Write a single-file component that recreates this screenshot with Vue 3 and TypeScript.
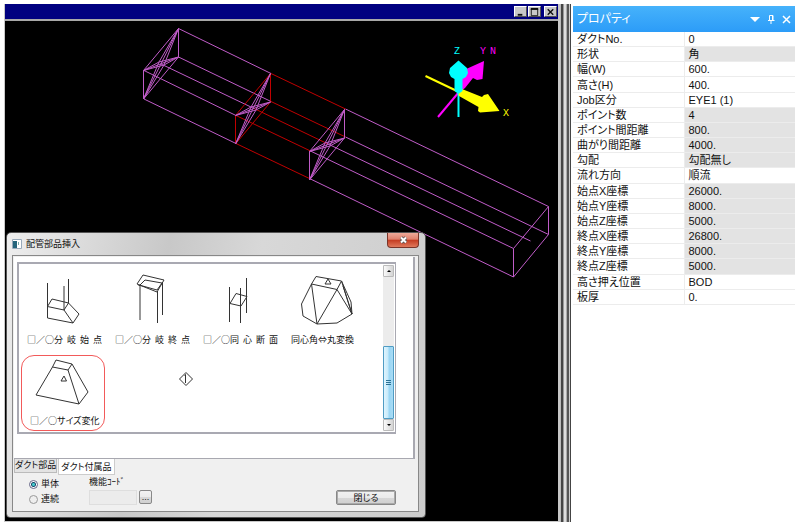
<script setup lang="ts">
import { ref } from 'vue'

interface Property {
  name: string
  value: string
  locked?: boolean
}

interface Part {
  label: string
  box: string
  path: string
}

const properties: Property[] = [
  { name: 'ダクトNo.', value: '0' },
  { name: '形状', value: '角', locked: true },
  { name: '幅(W)', value: '600.' },
  { name: '高さ(H)', value: '400.' },
  { name: 'Job区分', value: 'EYE1 (1)' },
  { name: 'ポイント数', value: '4', locked: true },
  { name: 'ポイント間距離', value: '800.', locked: true },
  { name: '曲がり間距離', value: '4000.', locked: true },
  { name: '勾配', value: '勾配無し', locked: true },
  { name: '流れ方向', value: '順流' },
  { name: '始点X座標', value: '26000.', locked: true },
  { name: '始点Y座標', value: '8000.', locked: true },
  { name: '始点Z座標', value: '5000.', locked: true },
  { name: '終点X座標', value: '26800.', locked: true },
  { name: '終点Y座標', value: '8000.', locked: true },
  { name: '終点Z座標', value: '5000.', locked: true },
  { name: '高さ押え位置', value: 'BOD' },
  { name: '板厚', value: '0.' },
]

const parts: Part[] = [
  {
    label: '□／○分  岐  始  点',
    box: '20 272 84 60',
    path: 'M47.5 284V319L73 324 79 315 68.5 304 52 300 47.5 307.5 64 311 73 324M68.5 280V304L64 311V287',
  },
  {
    label: '□／○分  岐  終  点',
    box: '108 272 84 60',
    path: 'M143 276L164 281 157 293 137 285ZM139 287L145 281 162 284 157 291 139 286ZM140 287V321M157.5 292V324M162.5 283V316',
  },
  {
    label: '□／○同  心  断  面',
    box: '196 272 84 60',
    path: 'M236 294.5L247 297.5 241 307 230 304.5ZM229.5 288V323M240.5 289V324M246.5 279V314',
  },
  {
    label: '同心角⇔丸変換',
    box: '284 272 84 60',
    path: 'M316 277.5L341.5 282 337 290.5 311.5 285ZM325 285H331L328 280ZM311.5 285L301.5 305 303 317 317 325 337 324 352 315 351 303 341.5 282 352 315 337 290.5 317 325ZM343 287L352 315',
  },
]

const faces = [
  { x: 144, y: 28, red: false },
  { x: 236, y: 73, red: true },
  { x: 310, y: 109, red: false },
]

const tab = ref(1)
const mode = ref('single')
const code = ref('')
</script>

<template>
  <main class="app">
    <section class="workspace">
      <header class="bar">
        <button aria-label="最小化"><svg viewBox="0 0 12 11"><path d="M3 8.5H8" stroke-width="2" /></svg></button>
        <button aria-label="最大化"><svg viewBox="0 0 12 11"><path d="M2.5 2V9.500H9.500V2.500M2 2.500H10" /><path d="M2 2H10" stroke-width="2" /></svg></button>
        <button class="apart" aria-label="終了"><svg viewBox="0 0 12 11"><path d="M3 2.500L9 8.500M9 2.500L3 8.500" stroke-width="1.500" /></svg></button>
      </header>
      <div class="canvas">
        <svg class="scene" viewBox="5 21 553 500" preserveAspectRatio="xMinYMin meet">
          <g class="violet">
            <path d="M178.500 28.500L271 73.500M178.500 57L271 101.500M161 64L253 108M144 70.500L236 115.500M144 99L236 143.500" />
            <path d="M345.500 109L548.500 206.500V234.500L345.500 137M328 144L530.500 241M310.500 151L513.500 248.500V277L310.500 179M548.500 206.500L513.500 248.500M548.500 234.500L513.500 277" />
          </g>
          <path class="red" d="M271 73.500L345.500 109M271 101.500L345.500 137M253 108L328 144M236 115.500L310.500 151M236 143.500L310.500 179" />
          <g v-for="f in faces" :key="f.x" class="violet" :transform="`translate(${f.x} ${f.y})`">
            <path :class="{ red: f.red }" d="M-.5 42.500L34.500 .5V29L-.5 71Z" />
            <path d="M34.500 .5L15 34 -.5 71 20 37 34.500 .5L-.5 71M-.5 42.500L15 34 34.500 29 20 37ZL34.500 29" />
          </g>
          <g fill="none" stroke-width="2">
            <path stroke="#f0f" d="M438 117L459 92" />
            <path stroke="#ff0" d="M425.500 76L459 92" />
            <path stroke="#0ff" d="M458.500 90V117" />
          </g>
          <path fill="#f0f" d="M461 91L457 83 463 78 464 70 484 61 482.500 79 477 80 473 78 465 88Z" />
          <path fill="#ff0" d="M458 92L462 89 482 97 484 95 488 94 499.500 111 480 112.500 478 111 478.500 107 459 96Z" />
          <path fill="#0ff" d="M458.500 60.500L467 68 468 73 466 77 462.500 79V91L458.500 94 454.500 91V79L451 77 449 73 450 68Z" />
          <g class="axis">
            <text x="454" y="54" fill="#0ff">Z</text>
            <text x="480" y="54" fill="#f0f">Y</text>
            <text x="490" y="54" fill="#f0f">N</text>
            <text x="503" y="116" fill="#ff0">X</text>
          </g>
        </svg>

        <section class="dialog" role="dialog" aria-labelledby="dialog-title">
          <header class="caption">
            <svg class="appicon" viewBox="0 0 10 10"><path fill="#fff" stroke="#9ab" d="M.5.5H9.500V9.500H.5Z" /><path fill="#25657c" d="M1 2H5V9H1Z" /><path fill="#7aa" d="M6 3H7V6H6Z" /></svg>
            <h2 id="dialog-title">配管部品挿入</h2>
            <button class="close" aria-label="閉じる">
              <svg viewBox="0 0 9 8"><path d="M2 1.500L7 6.500M7 1.500L2 6.500" stroke="#555" stroke-width="3.600" /><path d="M2 1.500L7 6.500M7 1.500L2 6.500" stroke="#fff" stroke-width="2" /></svg>
            </button>
          </header>
          <div class="body">
            <div class="page">
              <div class="list">
                <div class="parts">
                  <button v-for="p in parts" :key="p.label" class="part">
                    <svg :viewBox="p.box"><path :d="p.path" /></svg>
                    <span>{{ p.label }}</span>
                  </button>
                  <button class="part chosen">
                    <svg viewBox="22 356 82 56"><path d="M56 360L72 364 68 370 52.500 367 36 395 79 404 88 392 72 364M56 360L52.500 367M68 370L79 404M61 381H66.500L64 376Z" /></svg>
                    <span>□／○サイズ変化</span>
                  </button>
                  <svg class="marker" viewBox="0 0 16 16"><path d="M8 1.500L14.500 8 8 14.500 1.500 8ZM6.500 4.500L7.500 3.500V12" /></svg>
                </div>
                <div class="scroll">
                  <button aria-label="上へ"><svg viewBox="0 0 6 4"><path d="M1 3L3 1 5 3Z" /></svg></button>
                  <div class="thumb"><i></i><i></i><i></i></div>
                  <button aria-label="下へ"><svg viewBox="0 0 6 4"><path d="M1 1L3 3 5 1Z" /></svg></button>
                </div>
              </div>
            </div>
            <div class="tabs" role="tablist">
              <button role="tab" :aria-selected="tab === 0" @click="tab = 0">ダクト部品</button>
              <button role="tab" :aria-selected="tab === 1" @click="tab = 1">ダクト付属品</button>
            </div>
            <form class="options" @submit.prevent>
              <div class="modes">
                <label><input v-model="mode" type="radio" value="single">単体</label>
                <label><input v-model="mode" type="radio" value="series">連続</label>
              </div>
              <div class="code">
                <label for="code">機能ｺｰﾄﾞ</label>
                <div class="entry">
                  <input id="code" v-model="code" type="text">
                  <button class="push" type="button">...</button>
                </div>
              </div>
              <button class="push done" type="button">閉じる</button>
            </form>
          </div>
        </section>
      </div>
    </section>
    <div class="splitter"></div>
    <aside class="panel">
      <header class="heading">
        <h1>プロパティ</h1>
        <button aria-label="メニュー"><svg viewBox="0 0 10 10"><path d="M0 3H10L5 8Z" /></svg></button>
        <button aria-label="固定"><svg viewBox="0 0 10 10"><path d="M3.500 6V1.500H7V6M2 6.500H8.500M5 7V10M6.500 2V6" /></svg></button>
        <button aria-label="閉じる"><svg viewBox="0 0 10 10"><path stroke-width="1.500" d="M1 2L8 9M8 2L1 9" /></svg></button>
      </header>
      <table>
        <tbody>
          <tr v-for="p in properties" :key="p.name">
            <th scope="row">{{ p.name }}</th>
            <td :class="{ locked: p.locked }">{{ p.value }}</td>
          </tr>
        </tbody>
      </table>
    </aside>
  </main>
</template>

<style>
body {
  margin: 0;
  background: #fff;
}
</style>

<style scoped>
* {
  box-sizing: border-box;
}
.app {
  display: grid;
  grid-template-columns: minmax(0, 1fr) 12px 228px;
  min-height: 100vh;
  padding: 4px 0 3px 4px;
  font-family: "Liberation Sans", "Noto Sans CJK JP", sans-serif;
  font-feature-settings: "palt";
  color: #111;
}
button {
  padding: 0;
  border: 0;
  background: none;
  color: inherit;
  font: inherit;
  font-feature-settings: inherit;
}
svg {
  display: block;
}
.workspace {
  display: flex;
  flex-direction: column;
  border: solid #c8c8c8;
  border-width: 0 2px 1px 1px;
}
.bar {
  display: flex;
  justify-content: flex-end;
  gap: 1px;
  padding: 2px 1px;
  height: 17px;
  background: #000080;
  border-bottom: 2px solid #a8a8a8;
}
.bar button {
  width: 13px;
  height: 11px;
  background: #c8c8c8;
  border: 1px solid;
  border-color: #fff #555 #555 #fff;
}
.bar .apart {
  margin-left: 2px;
}
.bar path {
  fill: none;
  stroke: #111;
}
.canvas {
  position: relative;
  flex: 1;
  background: #000;
}
.scene {
  width: 100%;
}
.scene path {
  stroke-linejoin: round;
}
.violet path {
  fill: none;
  stroke: #c05cc8;
}
.red,
.violet .red {
  fill: none;
  stroke: #c00000;
}
.axis {
  font: 10px "Liberation Mono", monospace;
}
.dialog {
  position: absolute;
  left: 1px;
  top: 211px;
  width: 420px;
  padding: 0 6px 5px 5px;
  border: 1px solid #555;
  border-radius: 5px 5px 4px 4px;
  background: linear-gradient(100deg, #eee 0, #ddd 15%, #c8c8c8 35%, #d8d8d8 55%, #ccc);
  font-size: 9px;
  line-height: 12px;
}
.caption {
  display: flex;
  align-items: center;
  height: 22px;
}
.appicon {
  width: 10px;
  height: 10px;
}
h1,
h2 {
  margin: 0;
  font-weight: 400;
}
.caption h2 {
  flex: 1;
  margin-left: 4px;
  font-size: 9px;
}
.close {
  align-self: flex-start;
  display: grid;
  place-items: center;
  width: 32px;
  height: 15px;
  border: 1px solid #7a3428;
  border-top: 0;
  border-radius: 0 0 4px 4px;
  background: linear-gradient(#eda999, #df806c 45%, #c43b20 50%, #e0795c);
}
.close svg {
  width: 9px;
  height: 8px;
}
.body {
  border: 1px solid #888;
  background: #f0f0f0;
}
.page {
  margin: 1px 3px 0 1px;
  padding: 5px 17px 24px 3px;
  background: #fff;
  border: solid #a8a8b0;
  border-width: 0 2px 1px 0;
}
.list {
  display: flex;
  height: 172px;
  padding: 1px 1px 1px 0;
  border: 2px solid #a9a9b2;
  border-right-width: 1px;
}
.parts {
  flex: 1;
  display: grid;
  grid-template-columns: repeat(4, 88px);
  grid-template-rows: 90px 77px;
  align-items: start;
}
.part {
  padding: 6px 4px 0 1px;
  text-align: left;
}
.part svg {
  width: 84px;
  height: 60px;
}
.part path,
.marker path {
  fill: none;
  stroke: #333;
}
.part span {
  display: block;
  margin-top: 3px;
  padding-left: 7px;
  font-family: "Noto Sans CJK JP", sans-serif;
  white-space: pre;
}
.chosen {
  width: 84px;
  margin-left: 2px;
  padding: 0;
  border: 1px solid #f25a5a;
  border-radius: 13px;
}
.chosen svg {
  width: 82px;
  height: 56px;
}
.chosen span {
  padding: 0 0 3px 8px;
}
.marker {
  align-self: start;
  justify-self: end;
  width: 16px;
  height: 16px;
  margin: 16px 1px 0 0;
}
.scroll {
  display: flex;
  flex-direction: column;
  justify-content: space-between;
  width: 11px;
  background: #ececec;
}
.scroll button {
  display: grid;
  place-items: center;
  height: 12px;
  border: 1px solid #bbb;
  border-radius: 1px;
  background: linear-gradient(90deg, #fafafa, #d4d4d4);
}
.scroll svg {
  width: 6px;
  height: 4px;
}
.thumb {
  display: flex;
  flex-direction: column;
  align-items: center;
  justify-content: center;
  gap: 1px;
  height: 73px;
  margin-top: auto;
  border: 1px solid #4f9cc4;
  border-radius: 1px;
  background: linear-gradient(90deg, #e0f4fd, #c5eafb 45%, #98d5f4 55%, #a9dcf5);
}
.thumb i {
  width: 5px;
  height: 1px;
  background: #2b7194;
}
.tabs {
  display: flex;
  align-items: flex-start;
  gap: 1px;
  padding-left: 1px;
  height: 16px;
}
.tabs button {
  height: 14px;
  padding: 0;
  border: 1px solid #bbb;
  border-top: 0;
  background: #e3e3e3;
  line-height: 13px;
}
.tabs button[aria-selected="true"] {
  height: 16px;
  padding: 0 2px;
  border-color: #ccc;
  background: #fff;
  line-height: 16px;
}
.options {
  display: flex;
  padding: 1px 22px 6px 16px;
}
.modes {
  display: grid;
  align-content: start;
  gap: 3px;
  width: 60px;
  padding-top: 2px;
}
.modes label {
  display: flex;
  align-items: center;
  gap: 3px;
}
.modes input {
  appearance: none;
  width: 9px;
  height: 9px;
  margin: 0;
  border: 1px solid #999;
  border-radius: 50%;
  background: #eee;
}
.modes input:checked {
  border-color: #668;
  background: radial-gradient(circle, #4cc 0 1px, #17466a 2px, #fff 3px);
}
.entry {
  display: flex;
  gap: 2px;
  margin-top: 2px;
}
.entry input {
  width: 48px;
  height: 15px;
  padding: 0 2px;
  border: 1px solid #dedede;
  background: #ececec;
  font: inherit;
}
.push {
  border: 1px solid #888;
  border-radius: 2px;
  background: linear-gradient(#f2f2f2, #ebebeb 50%, #d8d8d8 50%, #d0d0d0);
}
.entry .push {
  width: 13px;
  height: 14px;
  line-height: 8px;
}
.done {
  width: 60px;
  height: 15px;
  margin: 14px 0 0 auto;
  box-shadow: inset 0 0 0 1px #aaa;
}
.splitter {
  background: linear-gradient(90deg, #bbb 0 1px, #444 1px 3px, #999 3px 4px, #ddd 4px 6px, #aaa 6px 7px, #555 7px 9px, #ccc 9px 10px, #444 10px 11px, #fff 11px);
}
.panel {
  padding: 2px 5px 0 1px;
  font-size: 11px;
}
.heading {
  display: flex;
  align-items: center;
  gap: 6px;
  height: 26px;
  padding: 0 3px 0 4px;
  background: linear-gradient(#46b2fb, #2c9cf8);
}
.heading h1 {
  flex: 1;
  color: #fff;
  font-size: 12px;
  line-height: 16px;
}
.heading svg {
  width: 10px;
  height: 10px;
}
.heading path {
  fill: none;
  stroke: #fff;
}
.heading button:first-of-type path {
  fill: #fff;
  stroke: none;
}
table {
  width: 100%;
  height: 273px;
  border-collapse: collapse;
  table-layout: fixed;
  line-height: 14px;
}
th,
td {
  padding: 0 0 0 4px;
  border-bottom: 1px solid #ececec;
  font-weight: 400;
  text-align: left;
  white-space: nowrap;
}
th {
  border-right: 1px solid #ececec;
}
.locked {
  background: #e3e3e3;
}
</style>
